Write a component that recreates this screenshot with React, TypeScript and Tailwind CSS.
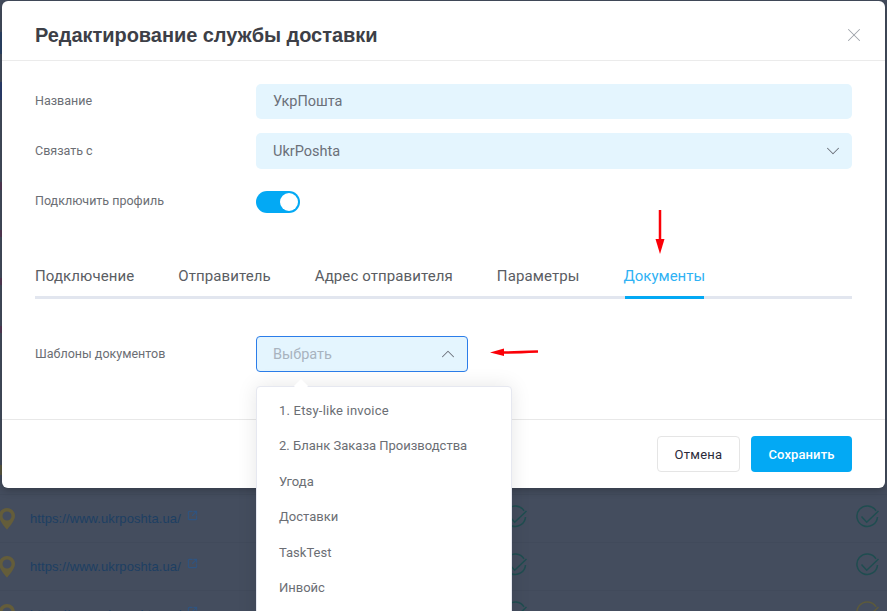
import { ChevronDown, ChevronUp, X, SquareArrowOutUpRight } from 'lucide-react';

const font = { fontFamily: 'Roboto, "Liberation Sans", sans-serif' };
const tabs = ['Подключение', 'Отправитель', 'Адрес отправителя', 'Параметры'];
const options = ['1. Etsy-like invoice', '2. Бланк Заказа Производства', 'Угода', 'Доставки', 'TaskTest', 'Инвойс'];

// bits of the page that show through the 2px gap left of the dialog
const edgeMarks = [
  { top: 32, height: 22, color: '#2b4468' },
  { top: 82, height: 18, color: '#2b3f70' },
  { top: 182, height: 8, color: '#553a56' },
  { top: 230, height: 7, color: '#553a56' },
  { top: 278, height: 7, color: '#553a56' },
  { top: 326, height: 7, color: '#553a56' },
  { top: 465, height: 10, color: '#5a5840' },
];

function CheckMark({ className }: { className: string }) {
  return (
    <svg className={className} width="24" height="24" viewBox="0 0 24 24" fill="none" stroke="currentColor" strokeWidth="1.5">
      <path d="M20 5.800A10.300 10.300 0 1 0 21.500 12" />
      <path d="M5.500 11.500L10.700 17.200L22.500 6" />
    </svg>
  );
}

function BackgroundRow({ lastCheckColor }: { lastCheckColor: string }) {
  return (
    <div className="relative h-[48px] shrink-0 border-t border-[#414a5b] flex items-center">
      <svg className="absolute left-[-4px] top-[13px]" width="22" height="22" viewBox="0 0 22 22">
        <path fillRule="evenodd" fill="#645d3a" d="M11 0a8 8 0 0 0-8 8C3 13 11 21.500 11 21.500S19 13 19 8a8 8 0 0 0-8-8zm0 3.500a4.500 4.500 0 1 1 0 9 4.500 4.500 0 0 1 0-9z" />
      </svg>
      <span className="ml-[30px] text-[13px] text-[#1d3f63] tracking-[0.08px]" style={{ fontFamily: '"Liberation Sans", sans-serif' }}>https://www.ukrposhta.ua/</span>
      <SquareArrowOutUpRight className="ml-[6px] mb-[6px] text-[#2f5480]" size={11} strokeWidth={2.4} />
      <CheckMark className="absolute left-[504px] top-[10px] text-[#1f4d50]" />
      <CheckMark className={`absolute left-[856px] top-[10px] ${lastCheckColor}`} />
    </div>
  );
}

export default function App() {
  return (
    <div className="relative h-[611px] w-[887px] overflow-hidden bg-[#444d5e]" style={font}>
      {/* Page behind the dialog */}
      <div className="flex flex-col pt-[494px]">
        <BackgroundRow lastCheckColor="text-[#1f4d50]" />
        <BackgroundRow lastCheckColor="text-[#1f4d50]" />
        <BackgroundRow lastCheckColor="text-[#5c5a3c]" />
      </div>
      {edgeMarks.map((m) => (
        <div key={m.top} className="absolute left-0 w-[2px]" style={{ top: m.top, height: m.height, backgroundColor: m.color }} />
      ))}

      {/* Dialog */}
      <div className="absolute left-[2px] top-[1px] w-[883px] h-[487px] rounded-[6px] bg-white flex flex-col shadow-[0_2px_8px_rgba(0,0,0,0.25)]">
        <div className="h-[60px] shrink-0 border-b border-[#ebebeb] flex items-center justify-between pl-[33px] pr-[20px] pt-[9px]">
          <h1 className="text-[20px] font-bold text-[#3d3f47] tracking-[-0.05px]" style={{ fontFamily: '"Liberation Sans", sans-serif' }}>Редактирование службы доставки</h1>
          <X className="text-[#9ea3aa]" size={22} strokeWidth={1.1} />
        </div>

        <div className="flex-1 pl-[33px] pr-[33px] pt-[23px]">
          <div className="flex items-center">
            <label className="w-[221px] text-[12.5px] text-[#6b6e74] pb-[1px]">Название</label>
            <div className="flex-1 h-[35px] rounded-[5px] bg-[#e4f5fe] flex items-center px-[17px] text-[14.5px] text-[#6b7079]">УкрПошта</div>
          </div>
          <div className="flex items-center mt-[14px]">
            <label className="w-[221px] text-[12.5px] text-[#6b6e74]">Связать с</label>
            <div className="flex-1 h-[36px] rounded-[5px] bg-[#e4f5fe] flex items-center justify-between pl-[17px] pr-[8px] text-[14.5px] text-[#6b7079]">
              <span className="pt-[2px]">UkrPoshta</span>
              <ChevronDown className="text-[#6b7079]" size={22} strokeWidth={1.1} />
            </div>
          </div>
          <div className="flex items-center mt-[22px]">
            <label className="w-[221px] text-[12.5px] text-[#6b6e74] pb-[2px]">Подключить профиль</label>
            <div className="w-[44px] h-[22px] rounded-full bg-[#03a9f4] flex items-center justify-end pr-[2px]">
              <div className="w-[18px] h-[18px] rounded-full bg-white" />
            </div>
          </div>

          <div className="flex mt-[51px] h-[35px] border-b-[3px] border-[#e2e6ef]">
            {tabs.map((t) => (
              <div key={t} className="mr-[44px] text-[15px] text-[#5a5d63] tracking-[0.1px] leading-[24px]">{t}</div>
            ))}
            <div className="relative text-[15px] text-[#2fb2f4] leading-[24px]">
              Документы
              <div className="absolute left-[2px] top-[32px] h-[3px] w-[79px] bg-[#03a9f4]" />
            </div>
          </div>

          <div className="flex items-center mt-[37px]">
            <label className="w-[221px] text-[12.5px] text-[#6b6e74]">Шаблоны документов</label>
            <div className="w-[212px] h-[36px] rounded-[4px] border border-[#2b7de9] bg-[#e4f5fe] flex items-center justify-between pl-[16px] pr-[8px] text-[14.5px] text-[#a8b3be]">
              <span className="pt-[2px]">Выбрать</span>
              <ChevronUp className="text-[#6b7079]" size={22} strokeWidth={1.1} />
            </div>
          </div>
        </div>

        <div className="h-[69px] shrink-0 border-t border-[#e8e8e8] flex items-start justify-end gap-[11px] pt-[16px] pr-[33px]">
          <button className="w-[83px] h-[36px] pt-[2px] rounded-[4px] border border-[#e5e5e5] bg-white text-[13px] text-[#2a2a3a] tracking-[0.25px]">Отмена</button>
          <button className="w-[101px] h-[36px] pt-[2px] rounded-[4px] bg-[#03a9f4] text-[13px] font-medium text-white tracking-[0.1px]">Сохранить</button>
        </div>
      </div>

      {/* Select dropdown */}
      <div className="absolute left-[256px] top-[386px] w-[256px] h-[240px] rounded-[4px] border border-[#e6e8f0] bg-white pl-[22px] pt-[6px] shadow-[0_0_20px_rgba(0,0,0,0.1)]">
        <div className="absolute left-[39px] top-[-6px] w-[10px] h-[10px] rotate-45 bg-white" />
        {options.map((o) => (
          <div key={o} className={`h-[35.4px] flex items-center text-[13px] text-[#6b6e74] ${o.startsWith('1.') ? 'tracking-[0.2px]' : ''}`}>{o}</div>
        ))}
      </div>

      {/* Red annotation arrows */}
      <svg className="absolute left-[650px] top-[208px]" width="20" height="48" viewBox="0 0 20 48">
        <path d="M10 2V34" stroke="#fb0007" strokeWidth="2.500" />
        <path d="M5.500 31H14.500L10 46Z" fill="#fb0007" />
      </svg>
      <svg className="absolute left-[488px] top-[343px]" width="52" height="18" viewBox="0 0 52 18">
        <path d="M14 9.500C24 9.500 38 9 50 8.500" stroke="#fb0007" strokeWidth="2.500" fill="none" />
        <path d="M2 9.500L16 5.500V13Z" fill="#fb0007" />
      </svg>
    </div>
  );
}
